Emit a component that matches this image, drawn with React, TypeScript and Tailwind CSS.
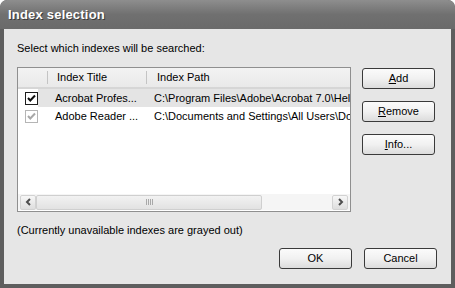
import React from "react";

const font = { fontFamily: '"Liberation Sans", Arial, sans-serif' };

function CheckBox({ disabled }: { disabled?: boolean }) {
  return (
    <div
      className={`w-[13px] h-[13px] border bg-white flex items-center justify-center ${
        disabled ? "border-[#b5b5b5]" : "border-[#1c1c1c]"
      }`}
    >
      <svg width="9" height="9" viewBox="0 0 9 9">
        <path
          d="M1 4 L3.3 6.5 L8 1.5"
          fill="none"
          stroke={disabled ? "#a8a8a8" : "#111"}
          strokeWidth="2"
        />
      </svg>
    </div>
  );
}

function XpButton({ children }: { children: React.ReactNode }) {
  return (
    <button className="w-[73px] h-[21px] rounded-[3px] border border-[#3a3a3a] bg-gradient-to-b from-[#fbfbfb] via-[#f1f1f1] to-[#dcdcdc] text-[11px] text-black leading-none flex items-center justify-center">
      {children}
    </button>
  );
}

function Arrow({ dir }: { dir: "left" | "right" }) {
  return (
    <div className="w-[16px] h-[15px] rounded-[2px] border border-[#d2d2d2] bg-gradient-to-b from-[#f7f7f7] to-[#dedede] flex items-center justify-center">
      <svg width="7" height="8" viewBox="0 0 7 8">
        <path
          d={dir === "left" ? "M5 1 L2 4 L5 7" : "M2 1 L5 4 L2 7"}
          fill="none"
          stroke="#4d4d4d"
          strokeWidth="2"
        />
      </svg>
    </div>
  );
}

const rows = [
  {
    title: "Acrobat Profes...",
    path: "C:\\Program Files\\Adobe\\Acrobat 7.0\\Hel",
    selected: true,
    disabled: false,
  },
  {
    title: "Adobe Reader ...",
    path: "C:\\Documents and Settings\\All Users\\Do",
    selected: false,
    disabled: true,
  },
];

export default function App() {
  return (
    <div
      className="w-[455px] h-[288px] bg-[#5e5e5e] rounded-t-[7px] flex flex-col overflow-hidden"
      style={font}
    >
      {/* title bar */}
      <div className="h-[29px] shrink-0 rounded-t-[7px] bg-gradient-to-b from-[#8e8e8e] via-[#707070] to-[#6a6a6a] flex items-center pl-[8px]">
        <span className="text-white font-bold text-[13px] tracking-[0.2px] [text-shadow:1px_1px_0_#3a3a3a]">
          Index selection
        </span>
      </div>

      {/* client */}
      <div className="flex-1 mx-[4px] mb-[4px] bg-[#e6e6e6] px-[13px] pt-[13px] text-[11px] text-black">
        <div className="h-[13px] leading-[13px]">Select which indexes will be searched:</div>

        <div className="flex mt-[12px]">
          {/* list */}
          <div className="w-[334px] h-[145px] border border-[#8f8f8f] bg-white flex flex-col overflow-hidden">
            <div className="h-[21px] shrink-0 flex items-center bg-gradient-to-b from-[#f3f3f3] to-[#e9e9e9] border-b-2 border-[#d6d6d6] whitespace-nowrap">
              <div className="w-[30px] h-[13px] border-r border-[#c4c4c4]" />
              <div className="w-[99px] h-[13px] border-r border-[#c4c4c4] pl-[9px] leading-[13px]">Index Title</div>
              <div className="pl-[10px] leading-[13px]">Index Path</div>
            </div>
            {rows.map((r) => (
              <div key={r.title} className="h-[18px] shrink-0 flex items-center whitespace-nowrap">
                <div className="w-[21px] pl-[7px] h-full flex items-center bg-white">
                  <CheckBox disabled={r.disabled} />
                </div>
                <div
                  className={`flex-1 h-full flex items-center ${r.selected ? "bg-[#e4e4e4]" : ""}`}
                >
                  <div className="w-[116px] pl-[17px] shrink-0">{r.title}</div>
                  <div className="overflow-hidden">{r.path}</div>
                </div>
              </div>
            ))}
            <div className="flex-1" />
            {/* horizontal scrollbar */}
            <div className="h-[16px] shrink-0 flex items-center px-[2px] bg-[#f5f5f5] mb-[1px]">
              <Arrow dir="left" />
              <div className="w-[226px] h-[15px] rounded-[2px] border border-[#cfcfcf] bg-gradient-to-b from-[#f2f2f2] to-[#e2e2e2] flex items-center justify-center">
                <div className="flex gap-[1px]">
                  {[0, 1, 2, 3].map((i) => (
                    <div key={i} className="w-[1px] h-[6px] bg-[#a8a8a8]" />
                  ))}
                </div>
              </div>
              <div className="flex-1" />
              <Arrow dir="right" />
            </div>
          </div>

          {/* side buttons */}
          <div className="ml-[11px] pt-[1px] flex flex-col gap-[12px]">
            <XpButton>
              <span>
                <u>A</u>dd
              </span>
            </XpButton>
            <XpButton>
              <span>
                <u>R</u>emove
              </span>
            </XpButton>
            <XpButton>
              <span>
                <u>I</u>nfo...
              </span>
            </XpButton>
          </div>
        </div>

        <div className="mt-[12px] h-[13px] leading-[13px]">(Currently unavailable indexes are grayed out)</div>

        <div className="flex justify-end gap-[12px] mt-[11px] pr-[1px]">
          <XpButton>OK</XpButton>
          <XpButton>Cancel</XpButton>
        </div>
      </div>
    </div>
  );
}
